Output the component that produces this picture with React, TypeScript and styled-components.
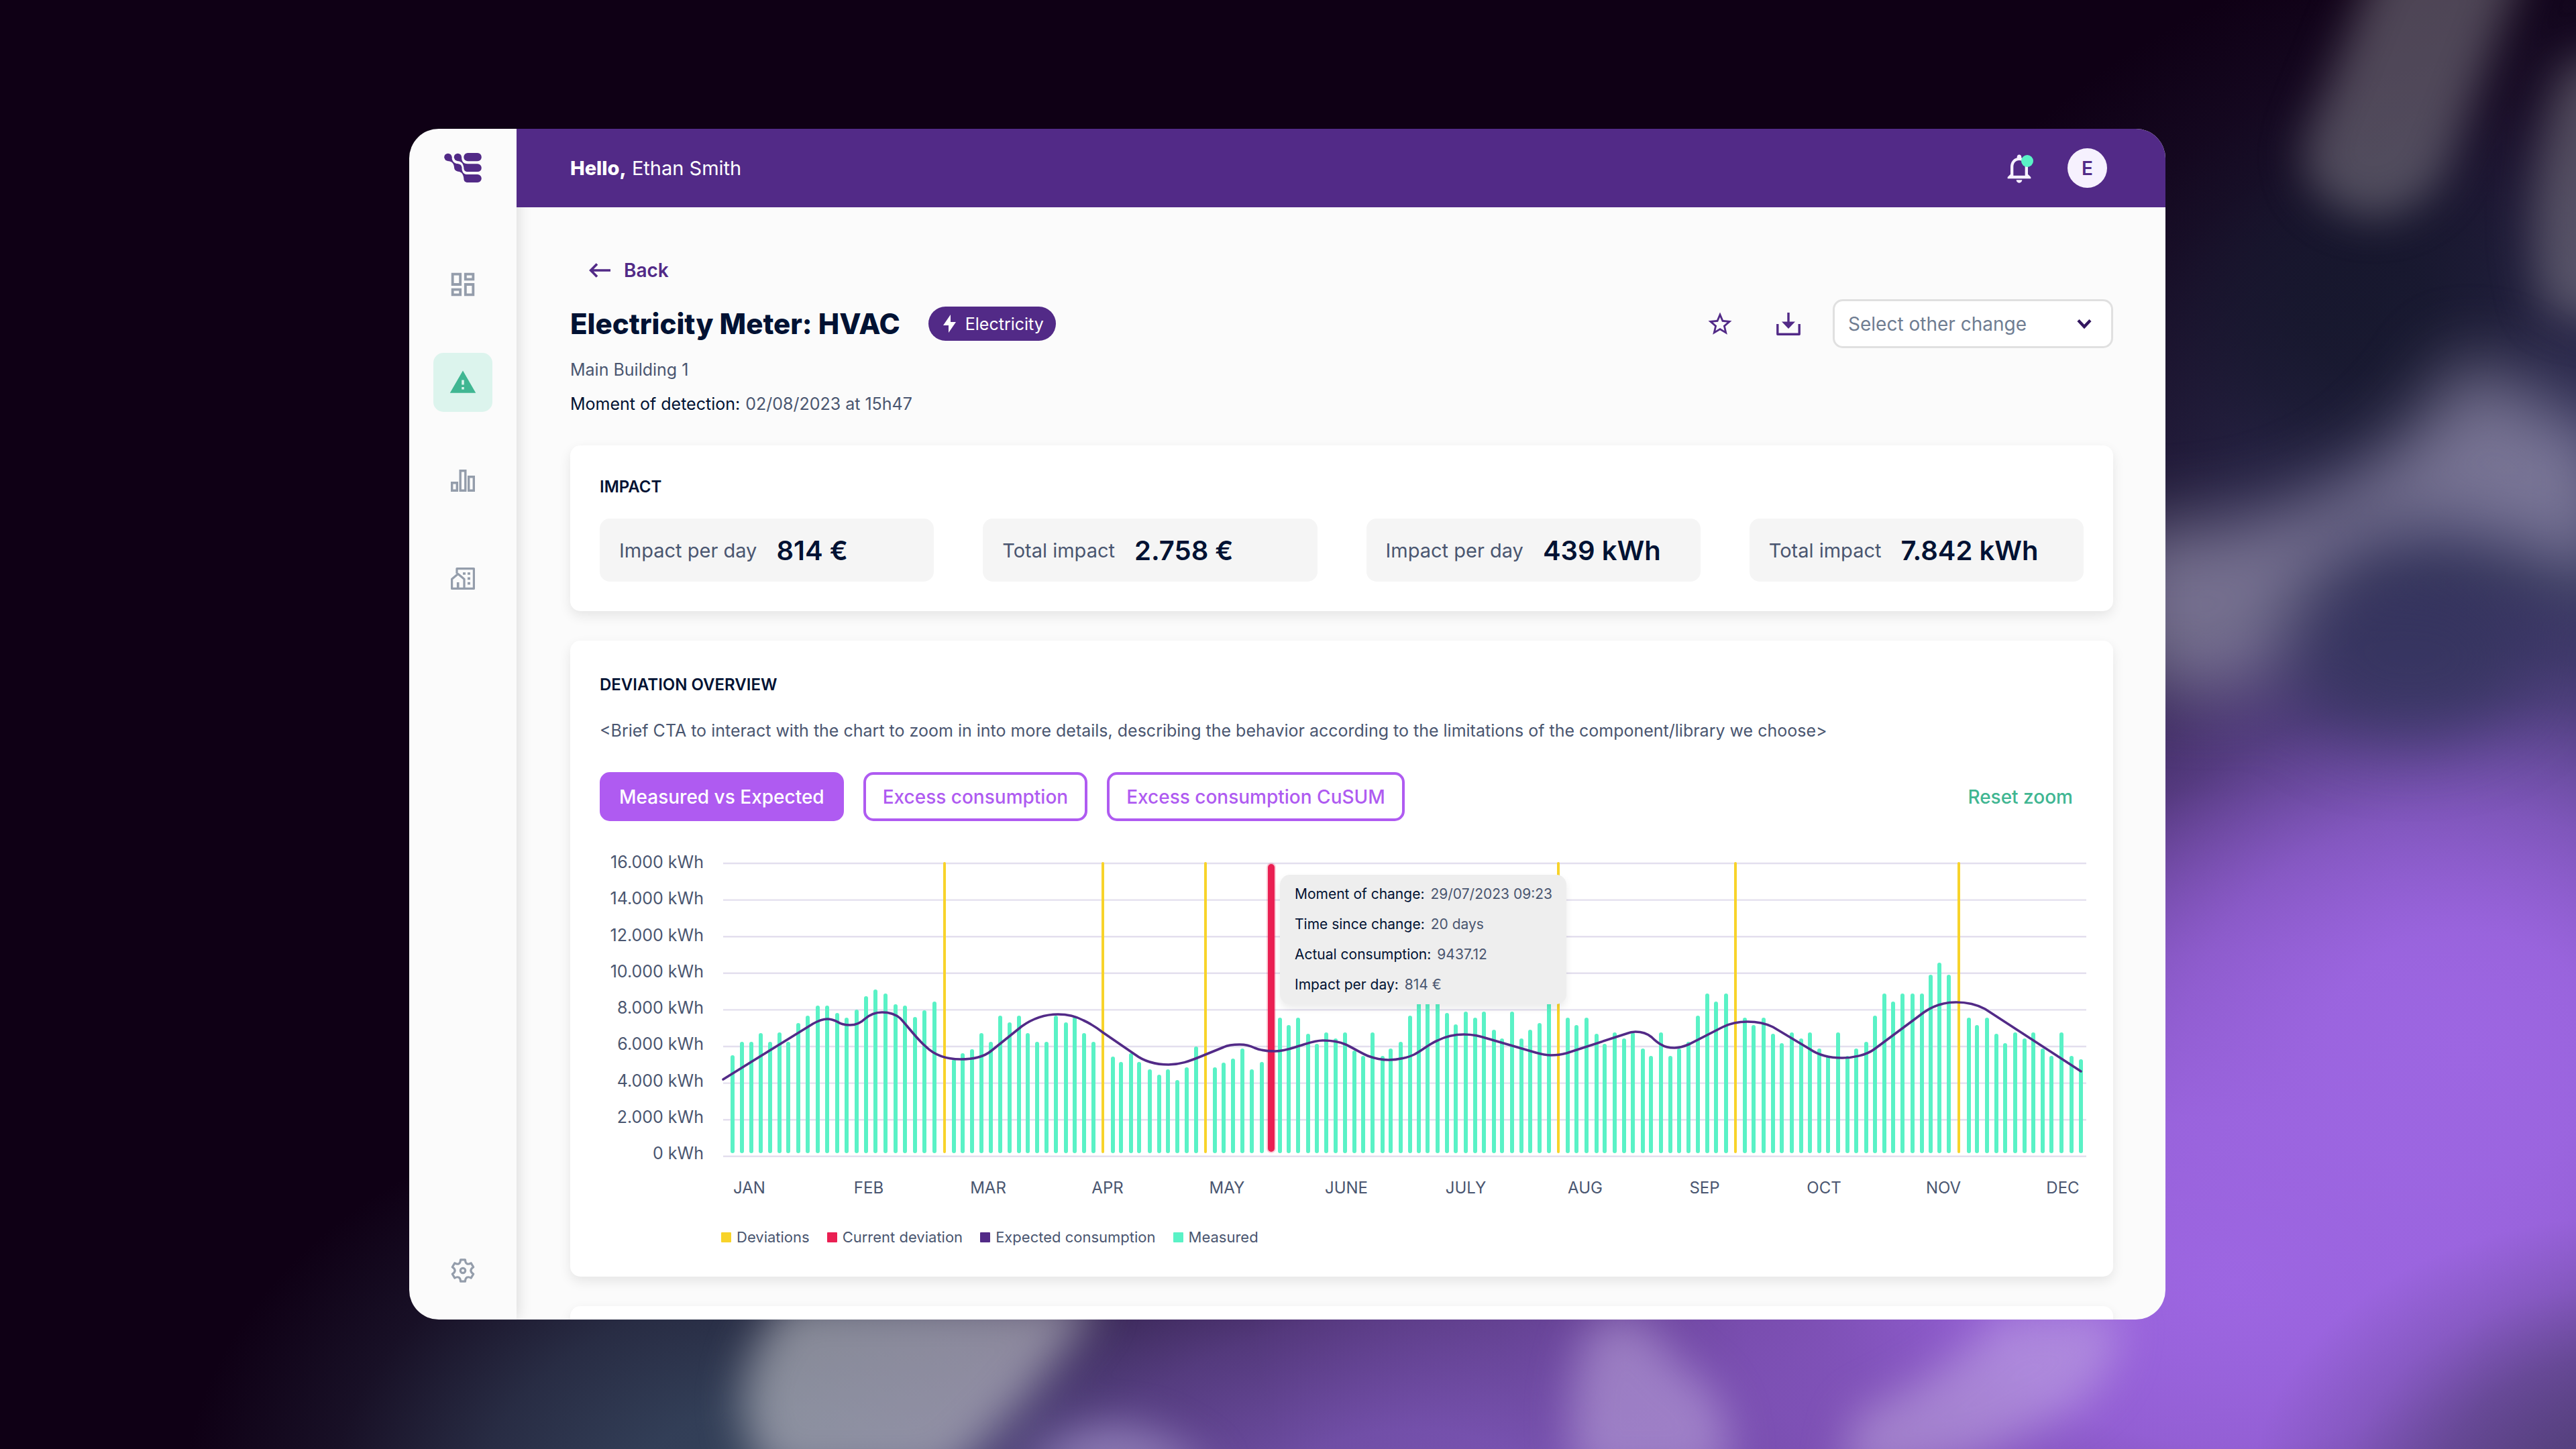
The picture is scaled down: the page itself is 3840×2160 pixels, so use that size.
import React from "react";
import styled, { createGlobalStyle } from "styled-components";
import { MdNotificationsNone, MdOutlineDashboard, MdStarBorder, MdWarning } from "react-icons/md";

const color = {
  brand: "#522a87",
  violet: "#af5bf1",
  ink: "#011233",
  text: "#4a5670",
  muted: "#6f7d92",
  icon: "#949dab",
  green: "#40b692",
  mint: "#5af2c6",
  yellow: "#f8d32a",
  red: "#ea1f52",
  grid: "#e3dfee",
  surface: "#fbfbfb",
};

const GlobalStyle = createGlobalStyle`
  *, *::before, *::after { box-sizing: border-box; }
  body {
    margin: 0;
    background: #0f0015;
    font-family: Inter, "Noto Sans", sans-serif;
    color: ${color.text};
  }
  h1, h2, p, dl, dd, ul { margin: 0; padding: 0; }
  ul { list-style: none; }
  button, select { font: inherit; cursor: pointer; }
  svg { display: block; }
`;

const Page = styled.div`
  position: relative;
  min-height: 100vh;
  padding: 192px 612px 193px 610px;
  overflow: hidden;
`;

const Backdrop = styled.svg`
  position: absolute;
  inset: 0;
  width: 100%;
  height: 100%;
`;

const Window = styled.div`
  position: relative;
  display: grid;
  grid-template-columns: 160px minmax(0, 1fr);
  height: calc(100vh - 385px);
  border-radius: 44px;
  overflow: hidden;
  background: ${color.surface};
`;

const Sidebar = styled.nav`
  display: flex;
  flex-direction: column;
  align-items: center;
  padding: 36px 0 29px;
  box-shadow: 0 0 22px rgba(0, 0, 0, 0.16);
`;

const SideList = styled.div`
  display: flex;
  flex-direction: column;
  gap: 58px;
  margin-top: 108px;
`;

const SideButton = styled.button<{ $active?: boolean }>`
  display: grid;
  place-items: center;
  width: 88px;
  height: 88px;
  padding: 0;
  border: 0;
  border-radius: 15px;
  background: ${(p) => (p.$active ? "#dcf4ed" : "transparent")};
  color: ${(p) => (p.$active ? color.green : color.icon)};
`;

const Spacer = styled.div`
  flex: 1;
`;

const Main = styled.div`
  position: relative;
  display: flex;
  flex-direction: column;
  min-width: 0;
  min-height: 0;
`;

const TopBar = styled.header`
  flex: none;
  display: flex;
  align-items: center;
  height: 117px;
  padding: 0 87px 0 80px;
  background: ${color.brand};
  color: #fff;
`;

const Greeting = styled.p`
  flex: 1;
  font-size: 29px;
  line-height: 36px;
  strong { font-weight: 800; }
`;

const BellButton = styled.button`
  position: relative;
  width: 52px;
  height: 52px;
  margin-right: 46px;
  padding: 0;
  border: 0;
  background: none;
  color: #f6f1fe;
`;

const BellDot = styled.span`
  position: absolute;
  top: 6px;
  right: 5px;
  width: 18px;
  height: 18px;
  border-radius: 50%;
  background: ${color.mint};
`;

const Avatar = styled.button`
  width: 59px;
  height: 59px;
  padding: 0;
  border: 0;
  border-radius: 50%;
  background: #f6f1fe;
  color: ${color.brand};
  font-size: 28px;
  font-weight: 600;
`;

const Content = styled.main`
  flex: 1;
  min-height: 0;
  overflow: hidden;
  padding: 72px 78px 0 80px;
`;

const BackLink = styled.a`
  display: inline-flex;
  align-items: center;
  gap: 20px;
  height: 44px;
  padding-left: 28px;
  color: ${color.brand};
  font-size: 28px;
  font-weight: 600;
  line-height: 44px;
  text-decoration: none;
`;

const TitleRow = styled.div`
  display: flex;
  align-items: center;
  height: 73px;
  margin-top: 21px;
`;

const Title = styled.h1`
  color: ${color.ink};
  font-size: 42px;
  font-weight: 800;
  line-height: 48px;
`;

const Badge = styled.span`
  display: flex;
  align-items: center;
  gap: 14px;
  height: 51px;
  margin-left: 42px;
  padding: 0 18px 0 22px;
  border-radius: 26px;
  background: ${color.brand};
  color: #fff;
  font-size: 25px;
`;

const Actions = styled.div`
  display: flex;
  align-items: center;
  gap: 58px;
  margin-left: auto;
`;

const IconButton = styled.button`
  display: grid;
  place-items: center;
  width: 44px;
  height: 44px;
  padding: 0;
  border: 0;
  background: none;
  color: ${color.brand};
`;

const SelectBox = styled.label`
  position: relative;
  width: 418px;
  margin-left: -14px;
  svg {
    position: absolute;
    top: 29px;
    right: 32px;
    pointer-events: none;
  }
`;

const Select = styled.select`
  appearance: none;
  width: 100%;
  height: 73px;
  padding: 0 80px 0 20px;
  border: 3px solid #e0e0e0;
  border-radius: 15px;
  background: #fff;
  color: ${color.muted};
  font-size: 28px;
`;

const Meta = styled.div`
  display: flex;
  flex-direction: column;
  gap: 15px;
  margin-top: 14px;
  font-size: 25px;
  line-height: 36px;
  span { color: ${color.ink}; margin-right: 8px; }
`;

const Card = styled.section<{ $chart?: boolean }>`
  margin-top: 44px;
  padding: ${(p) => (p.$chart ? "48px 40px 44px 44px" : "44px")};
  border-radius: 15px;
  background: #fff;
  box-shadow: 0 7px 18px rgba(0, 0, 0, 0.09);
`;

const CardTitle = styled.h2`
  color: ${color.ink};
  font-size: 24px;
  font-weight: 600;
  line-height: 36px;
`;

const Tiles = styled.dl`
  display: grid;
  grid-template-columns: repeat(4, minmax(0, 1fr));
  gap: 73px;
  margin-top: 29px;
`;

const Tile = styled.div`
  display: flex;
  align-items: center;
  gap: 29px;
  height: 94px;
  padding: 0 29px;
  border-radius: 15px;
  background: #f5f5f5;
  white-space: nowrap;
  dt { font-size: 29px; }
  dd { color: ${color.ink}; font-size: 40px; font-weight: 600; }
`;

const Description = styled.p`
  margin-top: 32px;
  font-size: 25px;
  line-height: 36px;
`;

const Toolbar = styled.div`
  display: flex;
  align-items: center;
  gap: 29px;
  margin-top: 44px;
`;

const ModeButton = styled.button<{ $active?: boolean }>`
  height: 73px;
  padding: 0 25px;
  border: 4px solid ${color.violet};
  border-radius: 15px;
  background: ${(p) => (p.$active ? color.violet : "#fff")};
  color: ${(p) => (p.$active ? "#fff" : color.violet)};
  font-size: 28px;
  font-weight: 500;
`;

const ResetButton = styled.button`
  margin-left: auto;
  padding: 0 20px;
  border: 0;
  background: none;
  color: ${color.green};
  font-size: 28px;
  font-weight: 500;
`;

const Chart = styled.div`
  display: grid;
  grid-template-columns: 155px minmax(0, 1fr);
  column-gap: 29px;
  margin-top: 43px;
`;

const YAxis = styled.ul`
  display: flex;
  flex-direction: column;
  justify-content: space-between;
  height: 470px;
  text-align: right;
  font-size: 25px;
  line-height: 36px;
  white-space: nowrap;
`;

const Plot = styled.div`
  position: relative;
  padding-top: 19px;
  > svg { width: 100%; height: 440px; overflow: visible; }
`;

const XAxis = styled.ul`
  grid-column: 2;
  display: flex;
  justify-content: space-between;
  margin: 16px -4px 0 0;
  font-size: 24px;
  line-height: 36px;
  li { display: flex; justify-content: center; width: 78px; }
`;

const Legend = styled.ul`
  grid-column: 2;
  display: flex;
  gap: 26px;
  margin: 40px 0 0 -3px;
  font-size: 22px;
  line-height: 30px;
  li { display: flex; align-items: center; gap: 8px; }
`;

const Swatch = styled.span<{ $color: string }>`
  width: 15px;
  height: 15px;
  border-radius: 1px;
  background: ${(p) => p.$color};
`;

const Tooltip = styled.dl`
  position: absolute;
  top: 37px;
  left: 830px;
  width: 427px;
  padding: 11px 22px;
  border-radius: 15px;
  background: #eeeeee;
  box-shadow: 0 6px 12px rgba(0, 0, 0, 0.08);
  font-size: 21px;
  line-height: 36px;
  white-space: nowrap;
  display: flex;
  flex-direction: column;
  gap: 9px;
  div { display: flex; gap: 9px; }
  dt { color: ${color.ink}; }
`;

const bars: [number, number][] = [
  [14, 287], [28, 267], [42, 267], [56, 254], [70, 267], [84, 253], [97, 267], [112, 239], [126, 228],
  [141, 213], [155, 213], [170, 224], [184, 231], [199, 219], [213, 199], [227, 189], [242, 195],
  [257, 211], [271, 213], [286, 230], [300, 220], [315, 207], [344, 293], [357, 284], [371, 278],
  [385, 254], [399, 267], [413, 228], [427, 238], [441, 228], [454, 254], [468, 267], [482, 267],
  [496, 228], [511, 238], [524, 230], [538, 254], [552, 267], [581, 289], [593, 297], [608, 284],
  [620, 297], [636, 308], [650, 316], [663, 308], [677, 324], [691, 305], [705, 274], [733, 305],
  [746, 298], [760, 292], [774, 277], [788, 308], [803, 297], [830, 231], [843, 242], [857, 231],
  [872, 255], [885, 270], [899, 253], [913, 262], [927, 253], [941, 280], [954, 288], [968, 253],
  [983, 288], [995, 277], [1010, 267], [1024, 228], [1037, 205], [1050, 205], [1065, 205], [1079, 224],
  [1092, 241], [1107, 222], [1121, 231], [1134, 222], [1149, 249], [1161, 262], [1176, 222],
  [1190, 262], [1203, 249], [1217, 239], [1231, 205], [1259, 231], [1272, 242], [1287, 231],
  [1302, 255], [1314, 270], [1329, 253], [1343, 262], [1356, 253], [1371, 277], [1383, 288],
  [1398, 253], [1412, 288], [1425, 277], [1439, 267], [1453, 228], [1467, 195], [1480, 207],
  [1495, 195], [1523, 231], [1536, 242], [1551, 231], [1565, 255], [1578, 269], [1593, 253],
  [1607, 262], [1620, 253], [1634, 277], [1647, 288], [1662, 253], [1676, 288], [1689, 277],
  [1704, 267], [1717, 228], [1731, 195], [1744, 207], [1758, 195], [1773, 195], [1787, 195],
  [1800, 167], [1813, 149], [1827, 167], [1857, 231], [1869, 242], [1884, 231], [1898, 255],
  [1911, 269], [1926, 253], [1940, 262], [1953, 253], [1967, 277], [1980, 288], [1995, 253],
  [2010, 288], [2024, 293],
];

const deviations = [330, 566, 719, 1245, 1509, 1842];

const expected =
  "M0 323L134 240C143 235 149 233 155 233C161 233 166 235 170 237C176 241 182 242 189 242" +
  "C196 242 204 240 211 233C219 226 227 223 237 223C247 223 257 226 264 232C277 246 289 263 302 274" +
  "C316 288 334 293 354 293C372 293 389 289 399 281L445 244C459 234 477 226 499 226" +
  "C514 226 526 229 537 235C548 240 557 246 566 253L614 286C626 295 644 301 664 301" +
  "C680 301 693 297 719 286L746 275C752 272 761 271 770 271C779 271 786 273 792 276" +
  "C799 279 808 281 823 281C836 281 846 277 859 273C872 269 882 265 894 265" +
  "C906 265 919 267 928 271C937 275 951 284 961 288C969 291 980 294 992 294" +
  "C1006 294 1022 290 1030 286C1040 281 1053 270 1065 265C1077 259 1090 256 1104 256" +
  "C1118 256 1126 258 1139 262L1211 283C1218 285 1225 287 1234 287C1243 287 1250 286 1257 284" +
  "L1346 255C1351 253 1355 252 1360 252C1370 252 1378 255 1384 260C1388 264 1392 268 1398 271" +
  "C1404 275 1410 276 1418 276C1426 276 1432 274 1439 271L1490 245C1502 239 1514 237 1527 237" +
  "C1540 237 1553 239 1565 245L1620 278C1636 289 1652 291 1668 291C1684 291 1704 287 1716 278" +
  "L1790 223C1804 213 1820 208 1838 208C1855 208 1868 211 1881 218L2024 311";

const yLabels = ["16.000", "14.000", "12.000", "10.000", "8.000", "6.000", "4.000", "2.000", "0"];
const months = ["JAN", "FEB", "MAR", "APR", "MAY", "JUNE", "JULY", "AUG", "SEP", "OCT", "NOV", "DEC"];

const impacts = [
  ["Impact per day", "814 €"],
  ["Total impact", "2.758 €"],
  ["Impact per day", "439 kWh"],
  ["Total impact", "7.842 kWh"],
];

const legend = [
  ["Deviations", color.yellow],
  ["Current deviation", color.red],
  ["Expected consumption", color.brand],
  ["Measured", color.mint],
];

const details = [
  ["Moment of change:", "29/07/2023 09:23"],
  ["Time since change:", "20 days"],
  ["Actual consumption:", "9437.12"],
  ["Impact per day:", "814 €"],
];

const Logo = () => (
  <svg width="56" height="44" viewBox="0 0 168 133" fill={color.brand} aria-hidden="true">
    <rect x="88" y="0" width="80" height="37" rx="18" />
    <circle cx="17" cy="19" r="17" />
    <circle cx="61" cy="19" r="17" />
    <circle cx="62" cy="66" r="17" />
    <path d="M34 16C34 34 42 49 64 49L45 68C45 48 34 36 14 36Z" />
    <path d="M78 16C78 36 84 49 106 49H150A18 18 0 0 1 150 85H106C92 85 88 76 88 66C86 48 78 37 58 36Z" />
    <path d="M79 64C79 84 86 97 106 97H150A18 18 0 0 1 150 133H106C94 133 88 126 88 114C86 96 78 84 60 83Z" />
  </svg>
);

const BarsIcon = () => (
  <svg width="36" height="33" viewBox="0 0 36 33" fill="none" stroke="currentColor" strokeWidth="3.4" aria-hidden="true">
    <path d="M1.7 19.7h7.6v11.6H1.7zM14.2 1.7h7.6v29.6h-7.6zM26.7 10.7h7.6v20.6h-7.6z" />
  </svg>
);

const BuildingIcon = () => (
  <svg width="36" height="33" viewBox="0 0 36 33" fill="none" stroke="currentColor" strokeWidth="3.2" strokeLinejoin="round" aria-hidden="true">
    <path d="M9 9V1.6h25.4v29.8H20" />
    <path d="M1.6 31.4V17.2L10.8 9.6l9.2 7.6v14.2z" />
    <path d="M10.7 22v9M18 9h4M25 9h4M25 16.4h4M25 23.6h4" strokeWidth="3.6" />
  </svg>
);

const polar = (deg: number, r: number) => {
  const a = (deg * Math.PI) / 180;
  return `${(18 + r * Math.cos(a)).toFixed(2)} ${(18 + r * Math.sin(a)).toFixed(2)}`;
};

const gearPath =
  [0, 1, 2, 3, 4, 5]
    .map((k) => {
      const a = k * 60 - 90;
      return `${k === 0 ? "M" : "L"}${polar(a - 12, 16.5)}L${polar(a + 12, 16.5)}Q${polar(a + 16, 12.5)} ${polar(a + 30, 11.8)}Q${polar(a + 44, 12.5)} ${polar(a + 48, 16.5)}`;
    })
    .join("") + "Z";

const GearIcon = () => (
  <svg width="36" height="36" viewBox="0 0 36 36" fill="none" stroke="currentColor" strokeWidth="3.2" strokeLinejoin="round" aria-hidden="true">
    <path d={gearPath} />
    <circle cx="18" cy="18" r="3.7" />
  </svg>
);

const ArrowLeft = () => (
  <svg width="32" height="22" viewBox="0 0 32 22" fill="none" stroke="currentColor" strokeWidth="3.6" aria-hidden="true">
    <path d="M32 11H3M12 1.4L2.6 11L12 20.6" />
  </svg>
);

const DownloadIcon = () => (
  <svg width="36" height="34" viewBox="0 0 36 34" fill="none" stroke="currentColor" strokeWidth="3.4" strokeLinejoin="round" aria-hidden="true">
    <path d="M1.8 17v15.2h32.4V17M18 0v17" />
    <path d="M8 13.4h20L18 24z" fill="currentColor" stroke="none" />
  </svg>
);

const BoltIcon = () => (
  <svg width="19" height="27" viewBox="0 0 19 27" fill="currentColor" aria-hidden="true">
    <path d="M11 0L0 16h8v11L19 11h-8z" />
  </svg>
);

const Glow = ({ id, tint }: { id: string; tint: string }) => (
  <radialGradient id={id}>
    <stop offset="0" stopColor={tint} />
    <stop offset=".25" stopColor={tint} stopOpacity=".93" />
    <stop offset=".5" stopColor={tint} stopOpacity=".66" />
    <stop offset=".75" stopColor={tint} stopOpacity=".24" />
    <stop offset="1" stopColor={tint} stopOpacity="0" />
  </radialGradient>
);

const BackdropArt = () => (
  <Backdrop viewBox="0 0 1568 882" preserveAspectRatio="none" aria-hidden="true">
    <defs>
      <Glow id="navy" tint="#32335a" />
      <Glow id="slate" tint="#35435c" />
      <Glow id="plum" tint="#7452ac" />
      <Glow id="purple" tint="#9d66e2" />
      <Glow id="night" tint="#14162a" />
      <Glow id="dusk" tint="#54407c" />
      <filter id="soft" x="-40%" y="-40%" width="180%" height="180%" colorInterpolationFilters="sRGB">
        <feGaussianBlur stdDeviation="13" />
      </filter>
      <filter id="softer" x="-40%" y="-40%" width="180%" height="180%" colorInterpolationFilters="sRGB">
        <feGaussianBlur stdDeviation="22" />
      </filter>
    </defs>
    <rect width="1568" height="882" fill="#0f0015" />
    <ellipse cx="1580" cy="370" rx="480" ry="420" fill="url(#navy)" />
    <ellipse cx="470" cy="920" rx="360" ry="260" fill="url(#slate)" />
    <ellipse cx="860" cy="940" rx="420" ry="280" fill="url(#plum)" />
    <ellipse cx="1360" cy="780" rx="600" ry="400" fill="url(#purple)" />
    <ellipse cx="1500" cy="640" rx="340" ry="290" fill="url(#purple)" />
    <ellipse cx="1440" cy="190" rx="150" ry="140" fill="url(#night)" opacity=".8" />
    <ellipse cx="1600" cy="910" rx="230" ry="170" fill="url(#dusk)" />
    <g filter="url(#softer)">
      <path d="M1500 215Q1540 240 1590 270V360Q1540 330 1480 322Q1400 330 1384 410Q1350 430 1290 410V320Q1440 330 1500 215Z" fill="#aaa3c2" opacity=".6" />
      <ellipse cx="1468" cy="400" rx="74" ry="50" fill="#35345e" opacity=".8" />
    </g>
    <g filter="url(#soft)">
      <path d="M1450 -30L1540 -30L1486 110Q1450 150 1412 118Q1396 100 1406 80Z" fill="#8a8690" opacity=".5" />
      <path d="M1560 40L1600 30V200L1550 190Q1530 130 1560 40Z" fill="#8a8690" opacity=".5" />
      <path d="M480 790H670Q630 850 575 900H470Q430 850 480 790Z" fill="#c4c5cb" opacity=".6" />
      <path d="M640 880Q690 850 740 900H620Z" fill="#b6a8d8" opacity=".6" />
      <path d="M970 805Q1000 790 1020 830Q1060 850 1050 900H960Q950 840 970 805Z" fill="#cdbbe4" opacity=".45" />
      <path d="M1130 860Q1180 840 1220 800H1290Q1290 850 1240 868Q1190 900 1120 900Z" fill="#cdbbe4" opacity=".45" />
    </g>
  </Backdrop>
);

export default function App() {
  return (
    <>
      <GlobalStyle />
      <Page>
        <BackdropArt />
        <Window>
          <Sidebar aria-label="Main">
            <Logo />
            <SideList>
              <SideButton aria-label="Dashboard"><MdOutlineDashboard size={46} /></SideButton>
              <SideButton $active aria-label="Alerts"><MdWarning size={42} /></SideButton>
              <SideButton aria-label="Statistics"><BarsIcon /></SideButton>
              <SideButton aria-label="Buildings"><BuildingIcon /></SideButton>
            </SideList>
            <Spacer />
            <SideButton aria-label="Settings"><GearIcon /></SideButton>
          </Sidebar>

          <Main>
            <TopBar>
              <Greeting><strong>Hello,</strong> Ethan Smith</Greeting>
              <BellButton aria-label="Notifications">
                <MdNotificationsNone size={52} />
                <BellDot />
              </BellButton>
              <Avatar>E</Avatar>
            </TopBar>

            <Content>
              <BackLink href="#"><ArrowLeft />Back</BackLink>
              <TitleRow>
                <Title>Electricity Meter: HVAC</Title>
                <Badge><BoltIcon />Electricity</Badge>
                <Actions>
                  <IconButton aria-label="Add to favourites"><MdStarBorder size={42} /></IconButton>
                  <IconButton aria-label="Download"><DownloadIcon /></IconButton>
                  <SelectBox>
                    <Select aria-label="Select other change">
                      <option>Select other change</option>
                    </Select>
                    <svg width="22" height="16" viewBox="0 0 22 16" fill="none" stroke="#33175f" strokeWidth="4.4" aria-hidden="true">
                      <path d="M2 2.6L11 12L20 2.6" />
                    </svg>
                  </SelectBox>
                </Actions>
              </TitleRow>
              <Meta>
                <p>Main Building 1</p>
                <p><span>Moment of detection:</span>02/08/2023 at 15h47</p>
              </Meta>

              <Card>
                <CardTitle>IMPACT</CardTitle>
                <Tiles>
                  {impacts.map(([label, value]) => (
                    <Tile key={value}>
                      <dt>{label}</dt>
                      <dd>{value}</dd>
                    </Tile>
                  ))}
                </Tiles>
              </Card>

              <Card $chart>
                <CardTitle>DEVIATION OVERVIEW</CardTitle>
                <Description>
                  &lt;Brief CTA to interact with the chart to zoom in into more details, describing the behavior
                  according to the limitations of the component/library we choose&gt;
                </Description>
                <Toolbar>
                  <ModeButton $active>Measured vs Expected</ModeButton>
                  <ModeButton>Excess consumption</ModeButton>
                  <ModeButton>Excess consumption CuSUM</ModeButton>
                  <ResetButton>Reset zoom</ResetButton>
                </Toolbar>
                <Chart>
                  <YAxis>
                    {yLabels.map((label) => <li key={label}>{label} kWh</li>)}
                  </YAxis>
                  <Plot>
                    <svg viewBox="0 0 2032 440" preserveAspectRatio="none" role="img" aria-label="Measured and expected consumption per month">
                      <g stroke={color.grid} strokeWidth="2.4">
                        {yLabels.map((label, i) => (
                          <line key={label} x1="0" x2="2032" y1={1 + i * 54.6} y2={1 + i * 54.6} />
                        ))}
                      </g>
                      <g fill={color.mint}>
                        {bars.map(([x, y]) => (
                          <rect key={x} x={x - 3} y={y} width="6" height={433 - y} rx="3" />
                        ))}
                      </g>
                      <g stroke={color.yellow} strokeWidth="4" strokeLinecap="round">
                        {deviations.map((x) => <line key={x} x1={x} x2={x} y1="1" y2="431" />)}
                      </g>
                      <rect x="810" y="0" width="14" height="433" rx="7" fill={color.red} opacity=".22" />
                      <rect x="812" y="2" width="10" height="429" rx="5" fill={color.red} />
                      <path d={expected} fill="none" stroke={color.brand} strokeWidth="3.6" strokeLinecap="round" />
                    </svg>
                    <Tooltip>
                      {details.map(([label, value]) => (
                        <div key={label}>
                          <dt>{label}</dt>
                          <dd>{value}</dd>
                        </div>
                      ))}
                    </Tooltip>
                  </Plot>
                  <XAxis>
                    {months.map((month) => <li key={month}>{month}</li>)}
                  </XAxis>
                  <Legend>
                    {legend.map(([label, swatch]) => (
                      <li key={label}><Swatch $color={swatch} />{label}</li>
                    ))}
                  </Legend>
                </Chart>
              </Card>

              <Card aria-hidden="true" />
            </Content>
          </Main>
        </Window>
      </Page>
    </>
  );
}
